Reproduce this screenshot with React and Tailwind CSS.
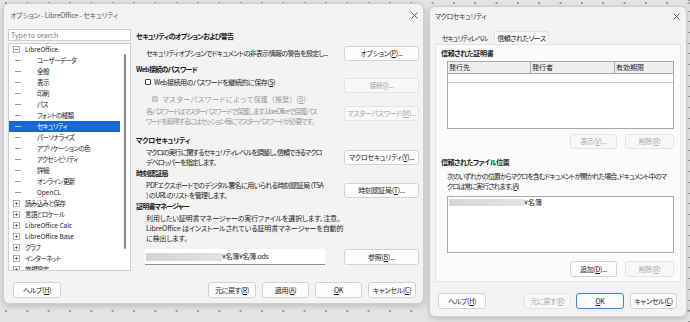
import React from "react";

function Btn({ children, className = "", disabled = false, primary = false }) {
  return (
    <div
      className={`flex shrink-0 items-center justify-center whitespace-nowrap rounded-[3px] border text-[7px] tracking-[-0.3px] ${
        disabled
          ? "border-[#e4e4e4] bg-[#f8f8f8] text-[#a6a6a6]"
          : primary
          ? "border-[#3b87d4] bg-[#fdfdfd] text-[#1b1b1b]"
          : "border-[#d3d3d3] bg-[#fdfdfd] text-[#1b1b1b]"
      } ${className}`}
    >
      {children}
    </div>
  );
}

function CloseX() {
  return (
    <svg width="7" height="7" viewBox="0 0 7 7">
      <path d="M0.5 0.5L6.5 6.5M6.5 0.5L0.5 6.5" stroke="#4a4a4a" strokeWidth="0.9" />
    </svg>
  );
}

function Expander({ open }) {
  return (
    <svg width="7" height="7" viewBox="0 0 7 7" className="shrink-0">
      <rect x="0.5" y="0.5" width="6" height="6" fill="#fff" stroke="#9c9c9c" strokeWidth="0.8" />
      <path d="M2 3.5H5" stroke="#555" strokeWidth="0.8" />
      {!open && <path d="M3.5 2V5" stroke="#555" strokeWidth="0.8" />}
    </svg>
  );
}

const tree = [
  { t: "LibreOffice", top: true, open: true, latin: true },
  { t: "ユーザーデータ" },
  { t: "全般" },
  { t: "表示" },
  { t: "印刷" },
  { t: "パス" },
  { t: "フォントの種類" },
  { t: "セキュリティ", sel: true },
  { t: "パーソナライズ" },
  { t: "アプリケーションの色" },
  { t: "アクセシビリティ" },
  { t: "詳細" },
  { t: "オンライン更新" },
  { t: "OpenCL", latin: true },
  { t: "読み込みと保存", top: true },
  { t: "言語とロケール", top: true },
  { t: "LibreOffice Calc", top: true, latin: true },
  { t: "LibreOffice Base", top: true, latin: true },
  { t: "グラフ", top: true },
  { t: "インターネット", top: true },
  { t: "常規設定", top: true },
];

function OptionsDialog() {
  return (
    <div className="absolute left-[3px] top-[3px] flex h-[301px] w-[421px] flex-col rounded-[6px] border border-[#cfcfcf] bg-[#f3f3f3] shadow-[0_2px_6px_rgba(0,0,0,0.18)]">
      {/* title */}
      <div className="flex h-[22px] items-center justify-between pl-[6px] pr-[5px] text-[7px] text-[#5a5a5a]">
        <span className="tracking-[-0.2px]">オプション - LibreOffice - セキュリティ</span>
        <CloseX />
      </div>

      {/* body */}
      <div className="flex pl-[4px] pt-[3px]">
        {/* left: search + tree */}
        <div className="flex w-[123px] flex-col">
          <div className="flex h-[12px] items-center border border-[#cfcfcf] bg-white pl-[2px] text-[7px] text-[#7c7c7c]">
            Type to search
          </div>
          <div className="mt-[2px] flex h-[228px] overflow-hidden border border-[#cfcfcf] bg-white">
            <div className="flex w-[111px] flex-col">
              {tree.map((r) => (
                <div
                  key={r.t}
                  className={`flex h-[11px] shrink-0 items-center whitespace-nowrap text-[6.5px] ${
                    r.latin ? "tracking-[0px]" : "tracking-[-0.6px]"
                  } ${r.sel ? "bg-[#1769d1] text-white" : "text-[#1b1b1b]"}`}
                >
                  {r.top ? (
                    <>
                      <span className="ml-[4px]">
                        <Expander open={r.open} />
                      </span>
                      <span className="ml-[5px]">{r.t}</span>
                    </>
                  ) : (
                    <>
                      <span className={`ml-[6px] h-px w-[6px] ${r.sel ? "bg-[#9cc2ee]" : "bg-[#9a9a9a]"}`} />
                      <span className="ml-[16px]">{r.t}</span>
                    </>
                  )}
                </div>
              ))}
            </div>
            <div className="flex w-[10px] justify-center">
              <div className="mt-[10px] h-[195px] w-[2px] rounded-full bg-[#8a8a8a]" />
            </div>
          </div>
        </div>

        {/* right: security options */}
        <div className="ml-[5px] flex flex-1 flex-col whitespace-nowrap pr-[4px] text-[7px] text-[#1b1b1b]">
          <div className="flex h-[14px] items-center font-bold tracking-[-0.7px]">セキュリティのオプションおよび警告</div>
          <div className="mt-[3px] flex h-[15px] items-center justify-between">
            <span className="pl-[10px] tracking-[-0.65px]">セキュリティオプションでドキュメントの非表示情報の警告を設定し...</span>
            <Btn className="h-[15px] w-[75px]">
              オプション(<u>P</u>)...
            </Btn>
          </div>
          <div className="mt-[1px] flex h-[14px] items-center font-bold tracking-[-0.7px]">Web接続のパスワード</div>
          <div className="flex justify-between">
            <div className="flex flex-col">
              <div className="flex h-[12px] items-center pl-[9px]">
                <span className="h-[6px] w-[6px] rounded-[1px] border border-[#444] bg-white" />
                <span className="ml-[3px] tracking-[-0.45px]">
                  Web接続用のパスワードを継続的に保存(<u>S</u>)
                </span>
              </div>
              <div className="mt-[5px] flex h-[12px] items-center pl-[16px] text-[#9a9a9a]">
                <svg width="6" height="6" viewBox="0 0 6 6" className="shrink-0">
                  <rect x="0" y="0" width="6" height="6" rx="1" fill="#c4c4c4" />
                  <path d="M1.3 3.1L2.5 4.2L4.7 1.8" stroke="#fff" strokeWidth="0.9" fill="none" />
                </svg>
                <span className="ml-[4px] tracking-[0.1px] [font-feature-settings:normal]">
                  マスターパスワードによって保護（推奨）(<u>B</u>)
                </span>
              </div>
              <div className="mt-[2px] pl-[10px] leading-[9.5px] tracking-[-1.1px] text-[#9a9a9a]">
                各パスワードはマスターパスワードで保護します。LibreOfficeで保護パス
                <br />
                ワードを取得するにはセッション毎にマスターパスワードが必要です。
              </div>
            </div>
            <div className="flex flex-col">
              <Btn disabled className="mt-[2px] h-[15px] w-[75px]">
                接続(<u>I</u>)...
              </Btn>
              <Btn disabled className="mt-[13px] h-[15px] w-[75px]">
                マスターパスワード(<u>M</u>)...
              </Btn>
            </div>
          </div>

          <div className="mt-[8px] flex h-[13px] items-center font-bold tracking-[-0.3px]">マクロセキュリティ</div>
          <div className="flex h-[20px] items-center justify-between">
            <span className="pl-[10px] leading-[10px] tracking-[-0.9px]">
              マクロの実行に関するセキュリティレベルを調整し、信頼できるマクロ
              <br />
              デベロッパーを指定します。
            </span>
            <Btn className="h-[15px] w-[75px]">
              マクロセキュリティ(<u>Y</u>)...
            </Btn>
          </div>
          <div className="flex h-[12px] items-center font-bold tracking-[-0.6px]">時刻認証局</div>
          <div className="mt-[1px] flex h-[20px] items-center justify-between">
            <span className="pl-[10px] leading-[10px] tracking-[-0.55px]">
              PDFエクスポートでのデジタル署名に用いられる時刻認証局（TSA
              <br />
              ）のURLのリストを管理します。
            </span>
            <Btn className="h-[15px] w-[75px]">
              時刻認証局(<u>T</u>)...
            </Btn>
          </div>
          <div className="flex h-[13px] items-center font-bold tracking-[-0.8px]">証明書マネージャー</div>
          <div className="pl-[10px] leading-[10px] tracking-[-0.1px]">
            利用したい証明書マネージャーの実行ファイルを選択します。注意。
            <br />
            LibreOffice はインストールされている証明書マネージャーを自動的
            <br />
            に検出します。
          </div>
          <div className="mt-[6px] flex h-[16px] items-center justify-between">
            <div className="ml-[9px] flex h-[16px] w-[180px] items-center border-b border-[#8d8d8d] bg-white">
              <span className="ml-[1px] h-[8px] w-[76px] bg-gradient-to-r from-[#d4d4d4] to-[#e2e2e2]" />
              <span className="tracking-[-0.3px]">¥名簿¥名簿.ods</span>
            </div>
            <Btn className="h-[16px] w-[75px]">
              参照(<u>B</u>)...
            </Btn>
          </div>
        </div>
      </div>

      {/* footer */}
      <div className="mt-[11px] flex h-[16px] items-center justify-between pl-[9px] pr-[7px]">
        <Btn className="h-[16px] w-[48px]">
          ヘルプ(<u>H</u>)
        </Btn>
        <div className="flex gap-[6px]">
          <Btn className="h-[16px] w-[48px]">
            元に戻す(<u>R</u>)
          </Btn>
          <Btn className="h-[16px] w-[47px]">
            適用(<u>A</u>)
          </Btn>
          <Btn className="h-[16px] w-[47px]">
            <u>O</u>K
          </Btn>
          <Btn className="h-[16px] w-[48px]">
            キャンセル(<u>C</u>)
          </Btn>
        </div>
      </div>
    </div>
  );
}

function MacroDialog() {
  return (
    <div className="absolute left-[429px] top-[6px] flex h-[311px] w-[258px] flex-col whitespace-nowrap rounded-[6px] border border-[#cfcfcf] bg-[#f3f3f3] text-[7px] text-[#1b1b1b] shadow-[0_2px_6px_rgba(0,0,0,0.18)]">
      {/* title */}
      <div className="flex h-[18px] items-center justify-between pl-[5px] pr-[6px] text-[#3a3a3a]">
        <span className="tracking-[-0.5px]">マクロセキュリティ</span>
        <CloseX />
      </div>

      {/* tabs */}
      <div className="mt-[6px] flex h-[13px] items-end pl-[5px]">
        <div className="flex h-[12px] w-[59px] items-center justify-center tracking-[-1.2px] text-[#333]">セキュリティレベル</div>
        <div className="flex h-[13px] w-[55px] items-center justify-center rounded-t-[2px] border border-b-0 border-[#e2e2e2] bg-[#fbfbfb] tracking-[-0.5px]">
          信頼されたソース
        </div>
      </div>

      {/* panel */}
      <div className="mx-[5px] flex flex-col border border-[#e4e4e4] bg-[#fbfbfb] pb-[4px] pr-[6px]">
        <div className="mt-[2px] flex h-[12px] items-center pl-[5px] font-bold tracking-[-0.3px]">信頼された証明書</div>
        <div className="ml-[11px] mt-[2px] flex h-[68px] flex-col border border-[#a8a8a8] bg-white">
          <div className="flex h-[12px] shrink-0 border-b border-[#a8a8a8] bg-[#efefef]">
            <div className="flex w-[83px] items-center border-r border-[#a8a8a8] pl-[1px]">発行先</div>
            <div className="flex w-[84px] items-center border-r border-[#a8a8a8] pl-[1px]">発行者</div>
            <div className="flex flex-1 items-center pl-[1px]">有効期限</div>
          </div>
          <div className="h-[9px] shrink-0 border-b border-[#c8c8c8]" />
        </div>
        <div className="mt-[5px] flex justify-end gap-[8px]">
          <Btn disabled className="h-[15px] w-[47px]">
            表示(<u>V</u>)...
          </Btn>
          <Btn disabled className="h-[15px] w-[49px]">
            削除(<u>R</u>)
          </Btn>
        </div>
        <div className="mt-[7px] flex h-[12px] items-center pl-[5px] font-bold tracking-[-0.4px]">信頼されたファイル位置</div>
        <div className="mt-[3px] pl-[11px] leading-[10px] tracking-[-0.95px]">
          次のいずれかの位置からマクロを含むドキュメントが開かれた場合、ドキュメント中のマ
          <br />
          クロは常に実行されます。(<u>A</u>)
        </div>
        <div className="ml-[11px] mt-[5px] flex h-[57px] flex-col border border-[#a8a8a8] bg-white">
          <div className="mt-[1px] flex h-[9px] items-center">
            <span className="ml-[1px] h-[7px] w-[75px] bg-gradient-to-r from-[#d6d6d6] to-[#e4e4e4]" />
            <span>¥名簿</span>
          </div>
        </div>
        <div className="mt-[8px] flex justify-end gap-[8px]">
          <Btn className="h-[16px] w-[47px]">
            追加(<u>D</u>)...
          </Btn>
          <Btn disabled className="h-[16px] w-[49px]">
            削除(<u>R</u>)
          </Btn>
        </div>
      </div>

      {/* footer */}
      <div className="mt-[11px] flex h-[16px] items-center justify-between pl-[8px] pr-[9px]">
        <Btn className="h-[16px] w-[48px]">
          ヘルプ(<u>H</u>)
        </Btn>
        <div className="flex gap-[5px]">
          <Btn disabled className="h-[16px] w-[47px]">
            元に戻す(<u>R</u>)
          </Btn>
          <Btn primary className="h-[16px] w-[48px]">
            <u>O</u>K
          </Btn>
          <Btn className="ml-[1px] h-[16px] w-[47px]">
            キャンセル(<u>C</u>)
          </Btn>
        </div>
      </div>
    </div>
  );
}

export default function App() {
  return (
    <div className="relative h-[322px] w-[690px] overflow-hidden bg-[#e4e4e4] bg-[radial-gradient(circle,#9c9c9c_0.7px,transparent_1.1px)] bg-[length:21.33px_308px] bg-[position:-4.67px_-151px] font-['Noto_Sans_CJK_JP','Noto_Sans',sans-serif] [font-feature-settings:'palt']">
      {/* ruler ticks at the right edge */}
      <div className="absolute right-0 top-0 h-full w-[2px] bg-[repeating-linear-gradient(to_bottom,#9a9a9a_0_1px,transparent_1px_10.7px)]" />
      <OptionsDialog />
      <MacroDialog />
    </div>
  );
}
